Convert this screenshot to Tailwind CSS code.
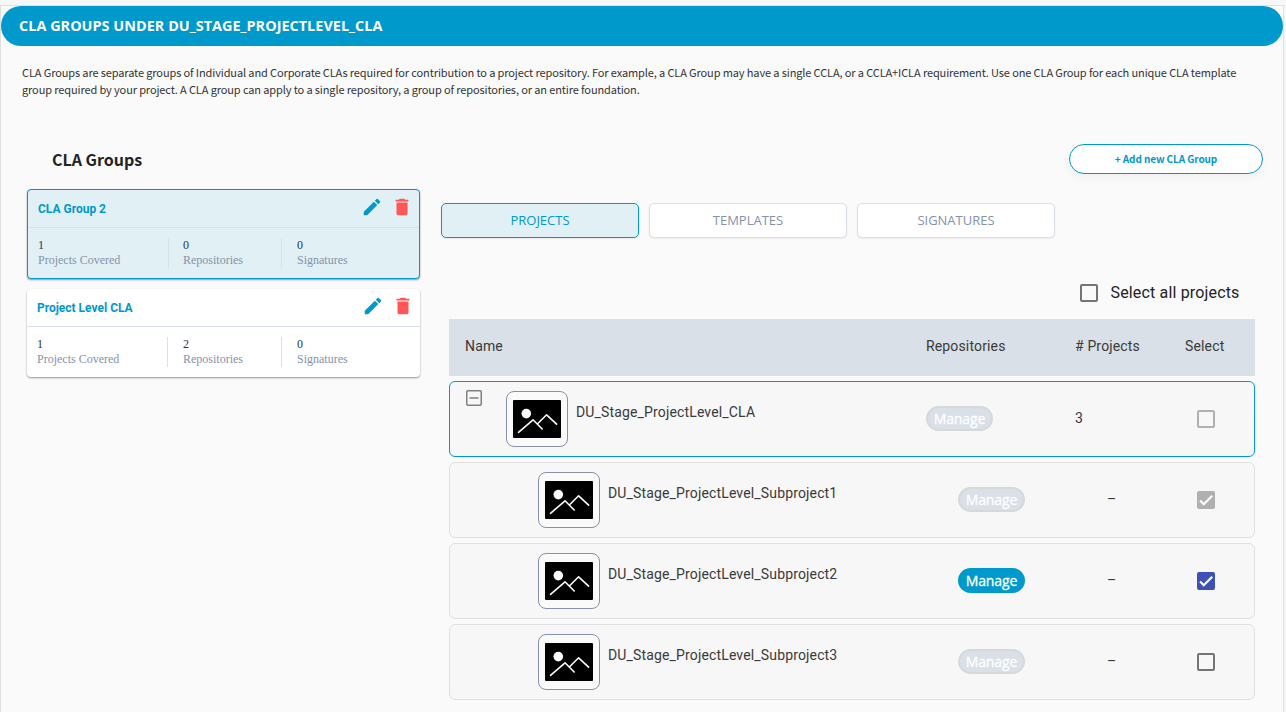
<!DOCTYPE html>
<html lang="en">
<head>
<meta charset="utf-8">
<title>CLA Groups</title>
<script src="https://cdn.jsdelivr.net/npm/@tailwindcss/browser@4"></script>
</head>
<body class="h-[712px] overflow-hidden bg-[#f7f7f7] font-['Roboto',sans-serif] text-[#222]">
<svg class="hidden">
  <symbol id="pencil" viewBox="0 0 24 24"><path fill="#0099cc" d="M3 17.25V21h3.75L17.81 9.94l-3.75-3.75L3 17.25zM20.71 7.04a1 1 0 0 0 0-1.41l-2.34-2.34a1 1 0 0 0-1.41 0l-1.83 1.83 3.75 3.75 1.83-1.83z"/></symbol>
  <symbol id="trash" viewBox="0 0 24 24"><path fill="#ff5757" d="M6 19c0 1.1.9 2 2 2h8c1.1 0 2-.9 2-2V7H6v12zM19 4h-3.5l-1-1h-5l-1 1H5v2h14V4z"/></symbol>
  <symbol id="image" viewBox="0 0 48 38"><rect width="48" height="38" rx="1" fill="#000"/><circle cx="13.3" cy="13.6" r="4.8" fill="#fafafa"/><path d="M5.5 32.3 20 19.8l9.2 9.2M24.6 23.8l9-9 10 9.4" fill="none" stroke="#fafafa" stroke-width="1.6" stroke-linecap="round" stroke-linejoin="round"/></symbol>
  <symbol id="check" viewBox="0 0 24 24"><path fill="none" stroke="#fafafa" stroke-width="3" d="M4.1 12.7 9 17.6 20.3 6.3"/></symbol>
</svg>
<main class="mt-[5px] ml-0 h-[720px] w-[1284px] border border-[#e0e0e0] bg-[#fafafa]">
  <h1 class="flex h-10 w-[1282px] items-center rounded-full bg-[#0099cc] pl-[18px] font-['Open_Sans',sans-serif] text-[14.4px] font-bold tracking-[0.04px] whitespace-nowrap text-white">CLA GROUPS UNDER DU_STAGE_PROJECTLEVEL_CLA</h1>
  <p class="mt-[18px] ml-[21px] font-['Noto_Sans_CJK_SC',sans-serif] text-[11px] leading-[17px] tracking-[-0.122px] whitespace-nowrap text-[#333]"><span>CLA Groups are separate groups of Individual and Corporate CLAs required for contribution to a project repository. For example, a CLA Group may have a single CCLA, or a CCLA+ICLA requirement. Use one CLA Group for each unique CLA template</span><br><span>group required by your project. A CLA group can apply to a single repository, a group of repositories, or an entire foundation.</span></p>
  <div class="mt-[46px] flex h-[30px] items-center justify-between pr-[20px] pl-[51px]">
    <h2 class="font-['Noto_Sans_CJK_SC',sans-serif] text-[16px] leading-[24px] font-bold">CLA Groups</h2>
    <button class="h-[30px] w-[194px] rounded-full border border-[#0099cc] bg-white font-['Noto_Sans_CJK_SC',sans-serif] text-[10px] leading-[28px] font-bold tracking-[-0.1px] text-[#0099cc] shadow-[0_4px_12px_rgba(0,0,0,0.04)]">+ Add new CLA Group</button>
  </div>
  <div class="mt-[15px] flex items-start">
    <aside class="ml-[26px] flex w-[393px] flex-col gap-[10px]">
      <section class="h-[90px] rounded-[4px] border border-[#0099cc] bg-[#e1f0f5] shadow-[0_1px_2px_rgba(0,0,0,0.4)]">
        <div class="flex h-[38px] border-b border-[#d9e0e8] pl-[10px]">
          <h3 class="w-[323px] pt-[10px] text-[12px] leading-[18px] font-bold text-[#0099cc]">CLA Group 2</h3>
          <svg class="mt-[6px] size-[22px] shrink-0"><use href="#pencil"/></svg>
          <svg class="mt-[6px] ml-[8px] size-[22px] shrink-0"><use href="#trash"/></svg>
        </div>
        <div class="flex pt-[10px] pl-[10px] font-['Liberation_Serif',serif] text-[12px] leading-[15px] text-[#8592ab]">
          <div class="h-[30px] w-[131px] border-r border-[#d9e0e8]"><p class="text-[#1f3453]">1</p><p>Projects Covered</p></div>
          <div class="h-[30px] w-[113px] border-r border-[#d9e0e8] pl-[14px]"><p class="text-[#1f3453]">0</p><p>Repositories</p></div>
          <div class="pl-[15px]"><p class="text-[#1f3453]">0</p><p>Signatures</p></div>
        </div>
      </section>
      <section class="h-[88px] rounded-[4px] bg-white shadow-[0_1px_2px_rgba(0,0,0,0.4)]">
        <div class="flex h-[38px] border-b border-[#d9e0e8] pl-[10px]">
          <h3 class="w-[325px] pt-[10px] text-[12px] leading-[18px] font-bold text-[#0099cc]">Project Level CLA</h3>
          <svg class="mt-[6px] size-[22px] shrink-0"><use href="#pencil"/></svg>
          <svg class="mt-[6px] ml-[8px] size-[22px] shrink-0"><use href="#trash"/></svg>
        </div>
        <div class="flex pt-[10px] pl-[10px] font-['Liberation_Serif',serif] text-[12px] leading-[15px] text-[#8592ab]">
          <div class="h-[30px] w-[131px] border-r border-[#d9e0e8]"><p class="text-[#1f3453]">1</p><p>Projects Covered</p></div>
          <div class="h-[30px] w-[114px] border-r border-[#d9e0e8] pl-[15px]"><p class="text-[#1f3453]">2</p><p>Repositories</p></div>
          <div class="pl-[15px]"><p class="text-[#1f3453]">0</p><p>Signatures</p></div>
        </div>
      </section>
    </aside>
    <div class="mt-[14px] ml-[21px] w-[814px]">
      <nav class="flex gap-[10px] font-['Open_Sans',sans-serif] text-[13px]">
        <button class="h-[35px] w-[198px] rounded-[5px] border border-[#0099cc] bg-[#e1f0f5] text-[#0099cc] shadow-[0_1px_2px_rgba(0,0,0,0.06)]">PROJECTS</button>
        <button class="h-[35px] w-[198px] rounded-[5px] border border-[#d9e0e8] bg-white text-[#8592ab] shadow-[0_1px_2px_rgba(0,0,0,0.06)]">TEMPLATES</button>
        <button class="h-[35px] w-[198px] rounded-[5px] border border-[#d9e0e8] bg-white text-[#8592ab] shadow-[0_1px_2px_rgba(0,0,0,0.06)]">SIGNATURES</button>
      </nav>
      <label class="mt-[43px] flex h-[24px] items-center pl-[639px] text-[16px] tracking-[0.16px] whitespace-nowrap"><span class="mr-[12.5px] size-[18px] rounded-[2px] border-2 border-[#757575]"></span>Select all projects</label>
      <div class="mt-[14px] ml-[8px] flex w-[806px] flex-col gap-[5px] text-[14px] tracking-[0.15px] whitespace-nowrap text-[#3a3a3a]">
        <div class="flex h-[57px] bg-[#d9e0e8] pl-4 leading-[54px]">
          <span class="w-[461px]">Name</span><span class="w-[149px]">Repositories</span><span class="w-[110px]"># Projects</span><span>Select</span>
        </div>
        <div class="flex h-[76px] rounded-[6px] border border-[#0099cc] bg-[#f7f7f7]">
          <svg class="mt-[8px] ml-[16px] size-[16px]" viewBox="0 0 16 16" fill="none" stroke="#808080" stroke-width="1.5"><rect x=".75" y=".75" width="14.5" height="14.5" rx="1"/><path d="M3.5 8h9"/></svg>
          <span class="mt-[9px] ml-[24px] flex h-[56px] w-[62px] items-center justify-center rounded-[8px] border border-[#8592ab] bg-[#fafafa]"><svg class="h-[38px] w-[48px]"><use href="#image"/></svg></span>
          <span class="mt-[20px] ml-[8px] w-[350px] leading-[20px]">DU_Stage_ProjectLevel_CLA</span>
          <span class="mt-[24px] h-[25px] w-[67px] rounded-full border-2 border-[#d8d8d8] bg-[#d9e0e8] text-center font-['Open_Sans',sans-serif] text-[14px] leading-[22px] font-medium tracking-[-0.1px] text-white [-webkit-text-stroke:0.3px_white]">Manage</span>
          <span class="mt-[26px] ml-[82px] w-[122px] leading-[20px]">3</span>
          <span class="mt-[28px] size-[18px] rounded-[2px] border-2 border-[#b0b0b0]"></span>
        </div>
        <div class="flex h-[76px] rounded-[6px] border border-[#e0e0e0] bg-[#f7f7f7]">
          <span class="mt-[9px] ml-[88px] flex h-[56px] w-[62px] items-center justify-center rounded-[8px] border border-[#8592ab] bg-[#fafafa]"><svg class="h-[38px] w-[48px]"><use href="#image"/></svg></span>
          <span class="mt-[20px] ml-[8px] w-[350px] leading-[20px]">DU_Stage_ProjectLevel_Subproject1</span>
          <span class="mt-[24px] h-[25px] w-[67px] rounded-full border-2 border-[#d8d8d8] bg-[#d9e0e8] text-center font-['Open_Sans',sans-serif] text-[14px] leading-[22px] font-medium tracking-[-0.1px] text-white [-webkit-text-stroke:0.3px_white]">Manage</span>
          <span class="mt-[26px] ml-[82px] w-[90px] leading-[20px]">–</span>
          <span class="mt-[28px] size-[18px] rounded-[2px] bg-[#b0b0b0]"><svg class="size-[18px]"><use href="#check"/></svg></span>
        </div>
        <div class="flex h-[76px] rounded-[6px] border border-[#e0e0e0] bg-[#f7f7f7]">
          <span class="mt-[9px] ml-[88px] flex h-[56px] w-[62px] items-center justify-center rounded-[8px] border border-[#8592ab] bg-[#fafafa]"><svg class="h-[38px] w-[48px]"><use href="#image"/></svg></span>
          <span class="mt-[20px] ml-[8px] w-[350px] leading-[20px]">DU_Stage_ProjectLevel_Subproject2</span>
          <span class="mt-[24px] h-[25px] w-[67px] rounded-full border-2 border-[#0099cc] bg-[#0099cc] text-center font-['Open_Sans',sans-serif] text-[14px] leading-[22px] font-medium tracking-[-0.1px] text-white [-webkit-text-stroke:0.3px_white]">Manage</span>
          <span class="mt-[26px] ml-[82px] w-[90px] leading-[20px]">–</span>
          <span class="mt-[28px] size-[18px] rounded-[2px] bg-[#3f51b5]"><svg class="size-[18px]"><use href="#check"/></svg></span>
        </div>
        <div class="flex h-[76px] rounded-[6px] border border-[#e0e0e0] bg-[#f7f7f7]">
          <span class="mt-[9px] ml-[88px] flex h-[56px] w-[62px] items-center justify-center rounded-[8px] border border-[#8592ab] bg-[#fafafa]"><svg class="h-[38px] w-[48px]"><use href="#image"/></svg></span>
          <span class="mt-[20px] ml-[8px] w-[350px] leading-[20px]">DU_Stage_ProjectLevel_Subproject3</span>
          <span class="mt-[24px] h-[25px] w-[67px] rounded-full border-2 border-[#d8d8d8] bg-[#d9e0e8] text-center font-['Open_Sans',sans-serif] text-[14px] leading-[22px] font-medium tracking-[-0.1px] text-white [-webkit-text-stroke:0.3px_white]">Manage</span>
          <span class="mt-[26px] ml-[82px] w-[90px] leading-[20px]">–</span>
          <span class="mt-[28px] size-[18px] rounded-[2px] border-2 border-[#757575]"></span>
        </div>
      </div>
    </div>
  </div>
</main>
</body>
</html>
